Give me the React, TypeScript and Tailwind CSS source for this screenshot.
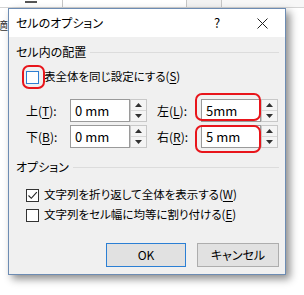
import React from 'react';

const font = "font-['Noto_Sans_CJK_JP','Noto_Sans',sans-serif] [font-feature-settings:'palt']";

const Acc: React.FC<{ k: string }> = ({ k }) => (
  <span>
    (<span className="underline underline-offset-2">{k}</span>)
  </span>
);

const Spinner: React.FC = () => (
  <div className="flex h-[23px] w-[17px] flex-col border border-[#c8c8c8] bg-[#f4f4f4]">
    <div className="flex flex-1 items-center justify-center border-b border-[#d8d8d8]">
      <svg width="7" height="4" viewBox="0 0 7 4">
        <polygon points="0,4 3.5,0 7,4" fill="#303030" />
      </svg>
    </div>
    <div className="flex flex-1 items-center justify-center">
      <svg width="7" height="4" viewBox="0 0 7 4">
        <polygon points="0,0 3.5,4 7,0" fill="#303030" />
      </svg>
    </div>
  </div>
);

const Field: React.FC<{ label: string; k: string; value: string }> = ({ label, k, value }) => (
  <div className="flex items-center">
    <div className="w-[44px] text-[12px] leading-none text-black">
      {label}
      <Acc k={k} />:
    </div>
    <div className="flex h-[23px] w-[60px] items-center border border-[#9a9a9a] bg-white pl-[4px] text-[13px] text-black">
      {value}
    </div>
    <Spinner />
  </div>
);

const GroupHeader: React.FC<{ title: string }> = ({ title }) => (
  <div className="flex h-[16px] items-center gap-[4px] pr-[6px]">
    <span className="text-[12px] leading-none text-black">{title}</span>
    <div className="h-px flex-1 bg-[#dcdcdc]" />
  </div>
);

const RedMark: React.FC<{ className: string }> = ({ className }) => (
  <div className={`absolute rounded-[7px] border-2 border-[#e8151b] ${className}`} />
);

export default function App() {
  return (
    <div className={`relative h-[295px] w-[304px] overflow-hidden bg-white ${font}`}>
      {/* sheet behind the dialog */}
      <div className="flex h-[8px] border-b border-[#d4d4d4] bg-white">
        <div className="w-[25px]" />
        <div className="mt-[1px] h-[2px] w-[12px] bg-[#555]" />
        <div className="w-[26px] border-r border-[#c6c6c6]" />
        <div className="w-[124px] border-r border-[#c6c6c6]" />
        <div className="w-[35px] border-r border-[#c6c6c6] bg-[#f2f2f2]" />
        <div className="flex-1 bg-[#f7f7f7]" />
      </div>
      <div className="flex">
        <div className="flex h-[40px] w-[8px] justify-end overflow-hidden pt-[12px] text-[11px] leading-none text-[#333]">
          <span className="shrink-0">適</span>
        </div>
        <div className="relative flex h-[267px] w-[278px] flex-col border border-[#6d8cb3] bg-[#f0f0f0] shadow-[4px_4px_8px_rgba(0,0,0,0.45)]">
          {/* title bar */}
          <div className="flex h-[28px] items-center bg-white pl-[7px] text-black">
            <span className="text-[12px] leading-none">セルのオプション</span>
            <div className="ml-auto flex h-full w-[44px] items-center justify-center text-[13px]">?</div>
            <div className="flex h-full w-[46px] items-center justify-center">
              <svg width="11" height="11" viewBox="0 0 11 11">
                <path d="M0.5 0.5 L10.5 10.5 M10.5 0.5 L0.5 10.5" stroke="#222" strokeWidth="1" />
              </svg>
            </div>
          </div>

          {/* body */}
          <div className="flex flex-1 flex-col pl-[7px]">
            <div className="mt-[7px]">
              <GroupHeader title="セル内の配置" />
            </div>
            <div className="mt-[5px] flex h-[24px] items-center pl-[10px]">
              <div className="h-[13px] w-[13px] border border-[#2f7fd2] bg-white" />
              <span className="ml-[5px] text-[11.5px] leading-none text-black">
                表全体を同じ設定にする
                <Acc k="S" />
              </span>
            </div>
            <div className="mt-[10px] flex gap-[10px] pl-[10px]">
              <Field label="上" k="T" value="0 mm" />
              <Field label="左" k="L" value="5mm" />
            </div>
            <div className="mt-[3px] flex gap-[10px] pl-[10px]">
              <Field label="下" k="B" value="0 mm" />
              <Field label="右" k="R" value="5 mm" />
            </div>
            <div className="mt-[11px]">
              <GroupHeader title="オプション" />
            </div>
            <div className="mt-[11px] flex h-[18px] items-center pl-[10px]">
              <div className="flex h-[13px] w-[13px] items-center justify-center border border-[#333] bg-white">
                <svg width="11" height="11" viewBox="0 0 11 11">
                  <path d="M1.5 5.5 L4.3 8.3 L9.8 2.2" stroke="#222" strokeWidth="1.1" fill="none" />
                </svg>
              </div>
              <span className="ml-[5px] text-[11.5px] leading-none text-black">
                文字列を折り返して全体を表示する
                <Acc k="W" />
              </span>
            </div>
            <div className="mt-[2px] flex h-[18px] items-center pl-[10px]">
              <div className="h-[13px] w-[13px] border border-[#333] bg-white" />
              <span className="ml-[5px] text-[11.5px] leading-none text-black">
                文字列をセル幅に均等に割り付ける
                <Acc k="E" />
              </span>
            </div>
            <div className="mt-[19px] flex justify-end gap-[11px] pr-[6px]">
              <div className="flex h-[24px] w-[80px] items-center justify-center border border-[#2b7fd4] bg-[#e1e1e1] text-[12px] text-black">
                OK
              </div>
              <div className="flex h-[24px] w-[82px] items-center justify-center border border-[#adadad] bg-[#e1e1e1] text-[12px] text-black">
                キャンセル
              </div>
            </div>
          </div>

          {/* red highlight marks */}
          <RedMark className="left-[13px] top-[56px] h-[24px] w-[23px]" />
          <RedMark className="left-[186px] top-[84px] h-[28px] w-[66px]" />
          <RedMark className="left-[186px] top-[116px] h-[28px] w-[66px]" />
        </div>
      </div>
    </div>
  );
}
